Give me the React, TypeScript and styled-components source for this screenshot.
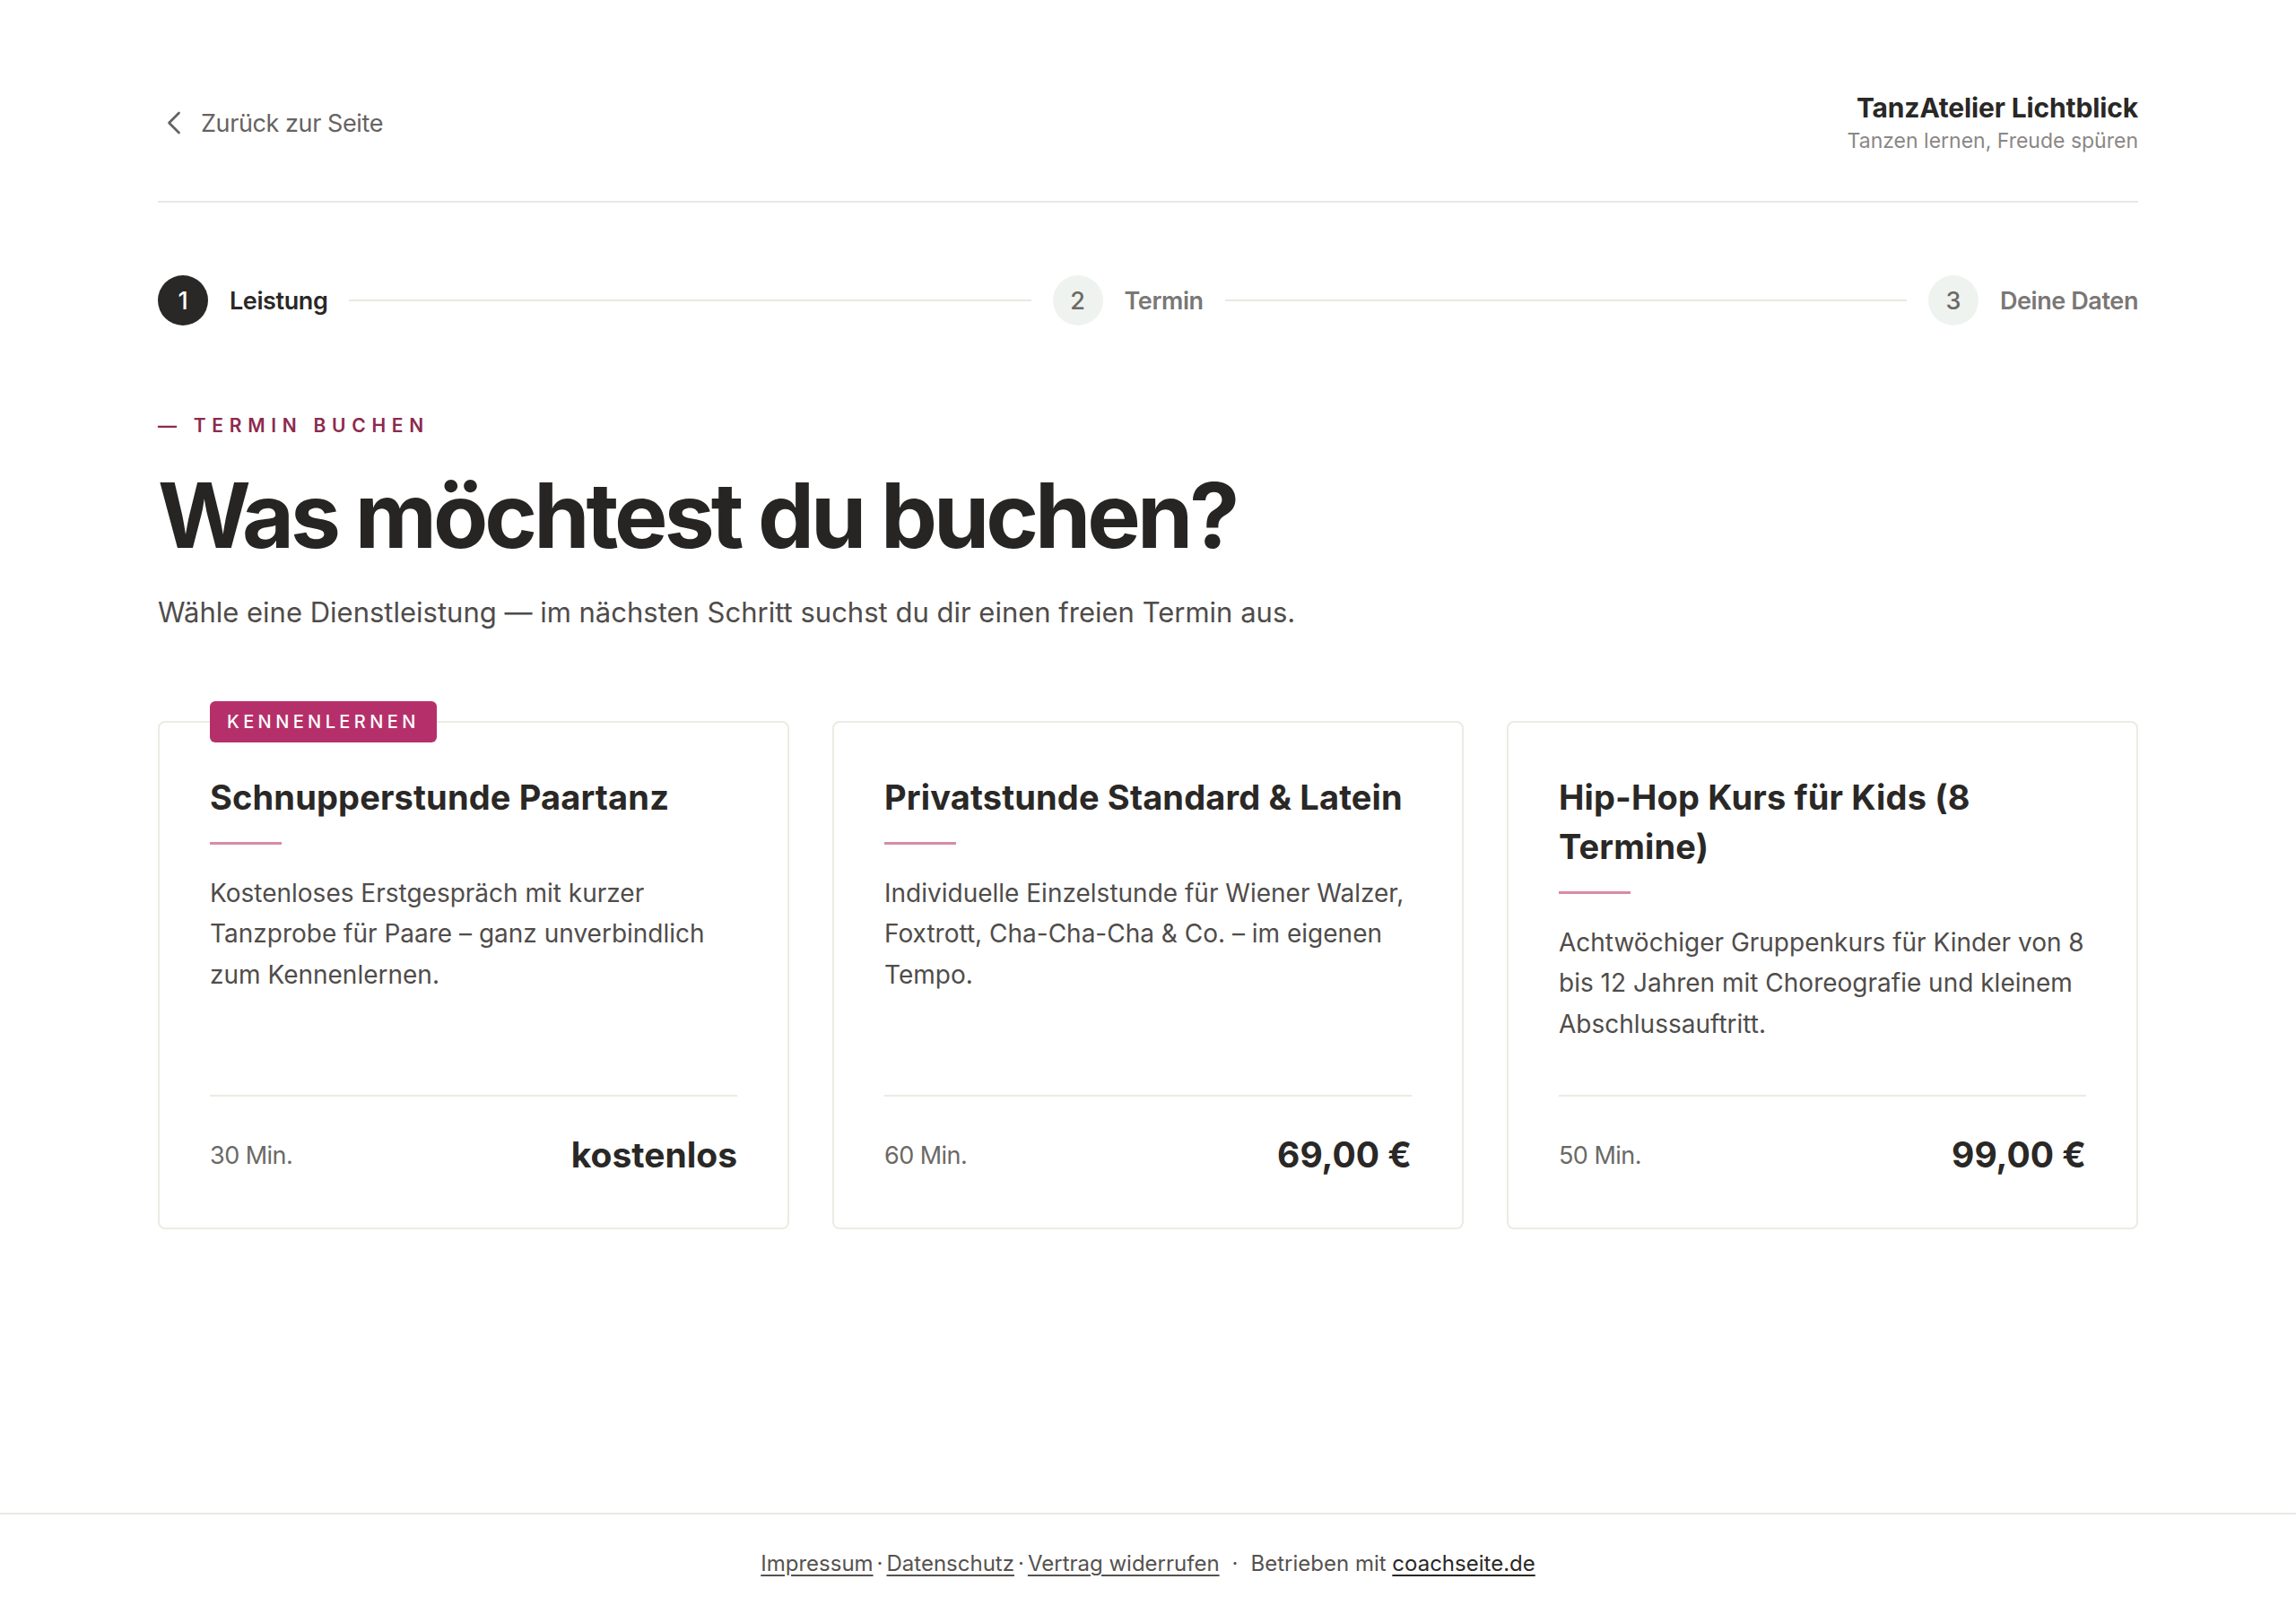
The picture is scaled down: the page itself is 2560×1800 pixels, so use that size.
import React from "react";
import styled, { createGlobalStyle } from "styled-components";
import { ChevronLeft } from "lucide-react";

const services = [
  {
    badge: "Kennenlernen",
    title: "Schnupperstunde Paartanz",
    text: "Kostenloses Erstgespräch mit kurzer Tanzprobe für Paare – ganz unverbindlich zum Kennenlernen.",
    duration: "30 Min.",
    price: "kostenlos",
  },
  {
    title: "Privatstunde Standard & Latein",
    text: "Individuelle Einzelstunde für Wiener Walzer, Foxtrott, Cha-Cha-Cha & Co. – im eigenen Tempo.",
    duration: "60 Min.",
    price: "69,00 €",
  },
  {
    title: "Hip-Hop Kurs für Kids (8 Termine)",
    text: "Achtwöchiger Gruppenkurs für Kinder von 8 bis 12 Jahren mit Choreografie und kleinem Abschlussauftritt.",
    duration: "50 Min.",
    price: "99,00 €",
  },
];

const steps = ["Leistung", "Termin", "Deine Daten"];

export default function App() {
  return (
    <>
      <GlobalStyle />
      <Page>
        <Main>
          <Header>
            <BackLink href="#">
              <ChevronLeft size={44} strokeWidth={1.5} />
              Zurück zur Seite
            </BackLink>
            <Brand>
              <BrandName>TanzAtelier Lichtblick</BrandName>
              <BrandTagline>Tanzen lernen, Freude spüren</BrandTagline>
            </Brand>
          </Header>

          <Stepper>
            {steps.map((label, i) => (
              <React.Fragment key={label}>
                {i > 0 && <StepLine />}
                <Step>
                  <StepNumber $active={i === 0}>{i + 1}</StepNumber>
                  <StepLabel $active={i === 0}>{label}</StepLabel>
                </Step>
              </React.Fragment>
            ))}
          </Stepper>

          <Eyebrow>— Termin buchen</Eyebrow>
          <Heading>Was möchtest du buchen?</Heading>
          <Lead>
            Wähle eine Dienstleistung — im nächsten Schritt suchst du dir einen
            freien Termin aus.
          </Lead>

          <CardGrid>
            {services.map((s) => (
              <Card key={s.title}>
                {s.badge && <Badge>{s.badge}</Badge>}
                <CardTitle>{s.title}</CardTitle>
                <Accent />
                <CardText>{s.text}</CardText>
                <CardFooter>
                  <Duration>{s.duration}</Duration>
                  <Price>{s.price}</Price>
                </CardFooter>
              </Card>
            ))}
          </CardGrid>
        </Main>

        <Footer>
          <FooterLink href="#">Impressum</FooterLink>
          <Dot>·</Dot>
          <FooterLink href="#">Datenschutz</FooterLink>
          <Dot>·</Dot>
          <FooterLink href="#">Vertrag widerrufen</FooterLink>
          <Dot $wide>·</Dot>
          Betrieben mit <FooterLink href="#" $strong>coachseite.de</FooterLink>
        </Footer>
      </Page>
    </>
  );
}

const GlobalStyle = createGlobalStyle`
  body {
    margin: 0;
    background: #ffffff;
    color: #2a2826;
    font-family: Inter, "Noto Sans", sans-serif;
    -webkit-font-smoothing: antialiased;
  }
`;

const Page = styled.div`
  min-height: 100vh;
  display: flex;
  flex-direction: column;
`;

const Main = styled.main`
  flex: 1;
  width: 2208px;
  margin: 0 auto;
  padding: 100px 0 0;
`;

const Header = styled.header`
  display: flex;
  justify-content: space-between;
  align-items: center;
  padding-bottom: 50px;
  border-bottom: 2px solid #e9e8e2;
`;

const BackLink = styled.a`
  display: flex;
  align-items: center;
  gap: 8px;
  margin-left: -4px;
  color: #666361;
  font-size: 27px;
  letter-spacing: -0.015em;
  text-decoration: none;
`;

const Brand = styled.div`
  text-align: right;
`;

const BrandName = styled.div`
  font-size: 30px;
  font-weight: 700;
  letter-spacing: -0.005em;
  line-height: 40px;
  color: #2a2826;
`;

const BrandTagline = styled.div`
  font-size: 23px;
  line-height: 34px;
  color: #8a8785;
`;

const Stepper = styled.div`
  display: flex;
  align-items: center;
  margin-top: 81px;
`;

const Step = styled.div`
  display: flex;
  align-items: center;
  gap: 24px;
`;

const StepNumber = styled.span<{ $active?: boolean }>`
  width: 56px;
  height: 56px;
  border-radius: 50%;
  display: grid;
  place-items: center;
  font-size: 27px;
  font-weight: 500;
  background: ${(p) => (p.$active ? "#2a2826" : "#eff3ef")};
  color: ${(p) => (p.$active ? "#ffffff" : "#6b6966")};
`;

const StepLabel = styled.span<{ $active?: boolean }>`
  font-size: 27px;
  font-weight: 600;
  letter-spacing: -0.015em;
  color: ${(p) => (p.$active ? "#2a2826" : "#7a7775")};
`;

const StepLine = styled.div`
  flex: 1;
  height: 2px;
  background: #e9e8e2;
  margin: 0 24px;
`;

const Eyebrow = styled.div`
  margin-top: 96px;
  font-size: 21px;
  font-weight: 600;
  letter-spacing: 0.32em;
  text-transform: uppercase;
  color: #8c2a4e;
  line-height: 32px;
`;

const Heading = styled.h1`
  margin: 26px 0 0;
  font-size: 100px;
  font-weight: 700;
  letter-spacing: -0.04em;
  line-height: 1.15;
  color: #262523;
`;

const Lead = styled.p`
  margin: 28px 0 0;
  font-size: 31px;
  font-weight: 400;
  line-height: 1.5;
  color: #4f4c4a;
`;

const CardGrid = styled.div`
  display: grid;
  grid-template-columns: repeat(3, 1fr);
  gap: 48px;
  margin-top: 97px;
`;

const Card = styled.article`
  position: relative;
  display: flex;
  flex-direction: column;
  padding: 56px;
  border: 2px solid #ecebe4;
  border-radius: 8px;
  background: #ffffff;
`;

const Badge = styled.span`
  position: absolute;
  top: -24px;
  left: 56px;
  height: 46px;
  padding: 0 19px;
  display: flex;
  align-items: center;
  border-radius: 6px;
  background: #b5306a;
  color: #ffffff;
  font-size: 20px;
  font-weight: 500;
  letter-spacing: 0.22em;
  text-transform: uppercase;
`;

const CardTitle = styled.h2`
  margin: 0;
  font-size: 38px;
  font-weight: 700;
  letter-spacing: 0.004em;
  line-height: 55px;
  color: #2a2826;
`;

const Accent = styled.div`
  width: 80px;
  height: 3px;
  margin-top: 22px;
  background: #d98aa8;
`;

const CardText = styled.p`
  flex: 1;
  margin: 32px 0 0;
  font-size: 28px;
  line-height: 45.5px;
  color: #4f4c4a;
`;

const CardFooter = styled.div`
  display: flex;
  justify-content: space-between;
  align-items: center;
  margin-top: 56px;
  padding-top: 40px;
  border-top: 2px solid #ecebe4;
`;

const Duration = styled.span`
  font-size: 27px;
  letter-spacing: -0.02em;
  color: #6b6966;
`;

const Price = styled.span`
  font-size: 39px;
  font-weight: 700;
  line-height: 50px;
  color: #2a2826;
`;

const Footer = styled.footer`
  border-top: 2px solid #e9e8e2;
  padding: 38px 0 40px;
  text-align: center;
  font-size: 24px;
  line-height: 33px;
  color: #55524f;
`;

const FooterLink = styled.a<{ $strong?: boolean }>`
  color: ${(p) => (p.$strong ? "#2a2826" : "#55524f")};
  text-decoration: underline;
  text-underline-offset: 4px;
`;

const Dot = styled.span<{ $wide?: boolean }>`
  margin: ${(p) => (p.$wide ? "0 14px" : "0 4px")};
`;
